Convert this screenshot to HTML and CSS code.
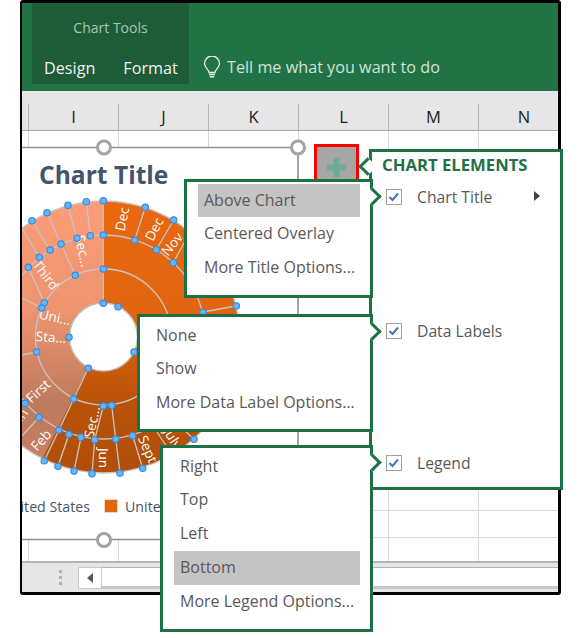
FILE: index.html
```html
<!DOCTYPE html>
<html lang="en">
<head>
<meta charset="utf-8">
<title>Chart Elements</title>
<link rel="stylesheet" href="styles.css">
</head>
<body>
<div class="frame">
  <header class="ribbon">
    <div class="tools">
      <div class="tools-title">Chart Tools</div>
      <div class="tabs"><span>Design</span><span>Format</span></div>
    </div>
    <div class="tell">
      <svg class="bulb" width="18" height="23" viewBox="0 0 18 23"><path d="M6 16.5c0-3-4.5-4.600-4.500-9A7.500 7.500 0 0 1 16.500 7.500c0 4.400-4.500 6-4.500 9z" fill="none" stroke="#e4efe8" stroke-width="1.300"/><path d="M6 18.500h6M6.800 20.800h4.400" stroke="#e4efe8" stroke-width="1.500" fill="none"/></svg>
      <span>Tell me what you want to do</span>
    </div>
  </header>
  <div class="cols">
    <div class="col stub"></div>
    <div class="col">I</div><div class="col">J</div><div class="col">K</div>
    <div class="col">L</div><div class="col">M</div><div class="col last">N</div>
  </div>
  <main class="sheet">
    <div class="chart">
      <svg class="pie" viewBox="22 147 276 392" width="276" height="392">
        <defs>
          <linearGradient id="orange" gradientUnits="userSpaceOnUse" x1="0" y1="201" x2="0" y2="473">
            <stop offset="0" stop-color="#e9680f"/><stop offset=".45" stop-color="#e06410"/><stop offset=".75" stop-color="#b85208"/><stop offset="1" stop-color="#b14e08"/>
          </linearGradient>
          <linearGradient id="salmon" gradientUnits="userSpaceOnUse" x1="0" y1="201" x2="0" y2="473">
            <stop offset="0" stop-color="#fb9d78"/><stop offset=".4" stop-color="#ee9470"/><stop offset=".75" stop-color="#bd7a5d"/><stop offset="1" stop-color="#cb8064"/>
          </linearGradient>
        </defs>
        <path class="edge" d="M22 147.500H298V539.500H22"/>
        <circle cx="103.500" cy="337" r="136" fill="url(#orange)"/>
        <path d="M103.500 337L42.600 458.600A136 136 0 0 1 103.500 201Z" fill="url(#salmon)"/>
        <g class="ring">
          <circle cx="103.500" cy="337" r="136"/>
          <circle cx="103.500" cy="337" r="102"/>
          <circle cx="103.500" cy="337" r="68"/>
          <path d="M103.300 201V303M86.300 201.700L90.300 235.700M68 205.300L77 238.300M47 212.700L61 244M32 220.700L50 250M22 228L39.300 257.300M145.300 207.300L134.700 240M173.700 220L156.300 249.700M190 232L173.300 262.700M44.300 460.700L88.300 368.300M58 466.300L69 434.300M74 471L81 437.300M92 473.700L94.700 439.700M120 473L115.700 439M142.700 468.300L132.700 435.700M236 306L203 312M61 244L75.300 275.300M28.300 267.300L44.300 302.700M22 298L41.700 308M36.700 352L22 355M103.300 406L94.700 439.700M111.700 405.300L115.700 439M39 417.300L22 436M25 403.300L22 403M157 432L167 447M194 439.300L182 428"/>
        </g>
        <circle class="hole" cx="103.500" cy="337" r="34"/>
        <g class="lbl">
          <text transform="translate(122 219) rotate(-78)">Dec</text>
          <text transform="translate(154 229) rotate(-63)">Dec</text>
          <text transform="translate(172 244) rotate(-50)">Nov</text>
          <text transform="translate(83 251) rotate(78)">Sec...</text>
          <text transform="translate(46 275) rotate(52)">Third</text>
          <text transform="translate(55 317) rotate(12)">Uni...</text>
          <text transform="translate(51 337) rotate(4)">Sta...</text>
          <text transform="translate(38 391) rotate(-42)">First</text>
          <text transform="translate(19 418) rotate(-55)">Jan</text>
          <text transform="translate(41 440) rotate(-48)">Feb</text>
          <text transform="translate(92 422) rotate(-78)">Sec...</text>
          <text transform="translate(104 458) rotate(90)">Jun</text>
          <text transform="translate(148 449) rotate(66)">Sept</text>
          <text transform="translate(173 438) rotate(58)">July</text>
        </g>
        <g class="dot">
          <circle cx="103.300" cy="200.700" r="3.200"/><circle cx="86.300" cy="201.700" r="3.200"/><circle cx="68" cy="205.300" r="3.200"/><circle cx="47" cy="212.700" r="3.200"/><circle cx="32" cy="220.700" r="3.200"/><circle cx="145.300" cy="207.300" r="3.200"/><circle cx="173.700" cy="220" r="3.200"/>
          <circle cx="103.300" cy="235" r="3.200"/><circle cx="90.300" cy="235.700" r="3.200"/><circle cx="77" cy="238.300" r="3.200"/><circle cx="61" cy="244" r="3.200"/><circle cx="50" cy="250" r="3.200"/><circle cx="39.300" cy="257.300" r="3.200"/><circle cx="28.300" cy="267.300" r="3.200"/><circle cx="134.700" cy="240" r="3.200"/><circle cx="156.300" cy="249.700" r="3.200"/><circle cx="173.300" cy="262.700" r="3.200"/>
          <circle cx="103.300" cy="269" r="3.200"/><circle cx="75.300" cy="275.300" r="3.200"/><circle cx="44.300" cy="302.700" r="3.200"/><circle cx="41.700" cy="308" r="3.200"/><circle cx="36.700" cy="352" r="3.200"/><circle cx="25" cy="403.300" r="3.200"/><circle cx="39" cy="417.300" r="3.200"/>
          <circle cx="103.300" cy="303.300" r="3.200"/><circle cx="118" cy="306.700" r="3.200"/><circle cx="69" cy="337.300" r="3.200"/><circle cx="88.300" cy="368.300" r="3.200"/><circle cx="134" cy="352" r="3.200"/>
          <circle cx="73.700" cy="399" r="3.200"/><circle cx="59" cy="430" r="3.200"/><circle cx="44.300" cy="460.700" r="3.200"/><circle cx="58" cy="466.300" r="3.200"/><circle cx="74" cy="471" r="3.200"/><circle cx="92" cy="473.700" r="3.200"/><circle cx="120" cy="473" r="3.200"/><circle cx="142.700" cy="468.300" r="3.200"/>
          <circle cx="69" cy="434.300" r="3.200"/><circle cx="81" cy="437.300" r="3.200"/><circle cx="94.700" cy="439.700" r="3.200"/><circle cx="115.700" cy="439" r="3.200"/><circle cx="132.700" cy="435.700" r="3.200"/><circle cx="103.300" cy="406" r="3.200"/><circle cx="111.700" cy="405.300" r="3.200"/><circle cx="194" cy="439.300" r="3.200"/><circle cx="203" cy="312.300" r="3.200"/><circle cx="236.300" cy="306" r="3.200"/>
        </g>
        <text class="legend-text" x="90" y="512" text-anchor="end">United States</text>
        <rect x="105" y="500" width="12" height="12" fill="#e2660f" stroke="#c9721f" stroke-width=".6"/>
        <text class="legend-text" x="125" y="512">United States</text>
        <g class="handle">
          <circle cx="104" cy="147.500" r="6.500"/><circle cx="298" cy="147.500" r="6.500"/><circle cx="104" cy="540" r="6.500"/>
        </g>
      </svg>
      <h1 class="chart-title">Chart Title</h1>
    </div>
  </main>
  <footer class="bar">
    <div class="grip"><i></i><i></i><i></i></div>
    <div class="scroll-btn"><b></b></div>
    <div class="track"></div>
  </footer>
</div>

<div class="plus-btn"><svg width="19" height="19" viewBox="0 0 19 19"><path d="M6.500 0h6v6.500H19v6h-6.500V19h-6v-6.500H0v-6h6.500z" fill="#6fac97"/></svg></div>

<aside class="panel">
  <i class="notch"></i>
  <h2>CHART ELEMENTS</h2>
  <div class="elem tall">
    <svg class="check" width="16" height="16" viewBox="0 0 16 16"><rect x=".5" y=".5" width="15" height="15" fill="#fff" stroke="#a0a0a0"/><path d="M3.500 8l3 3 5.500-6.500" fill="none" stroke="#3f78b8" stroke-width="2"/></svg>
    <span>Chart Title</span><b class="more"></b>
  </div>
  <div class="elem mid">
    <svg class="check" width="16" height="16" viewBox="0 0 16 16"><rect x=".5" y=".5" width="15" height="15" fill="#fff" stroke="#a0a0a0"/><path d="M3.500 8l3 3 5.500-6.500" fill="none" stroke="#3f78b8" stroke-width="2"/></svg>
    <span>Data Labels</span>
  </div>
  <div class="elem">
    <svg class="check" width="16" height="16" viewBox="0 0 16 16"><rect x=".5" y=".5" width="15" height="15" fill="#fff" stroke="#a0a0a0"/><path d="M3.500 8l3 3 5.500-6.500" fill="none" stroke="#3f78b8" stroke-width="2"/></svg>
    <span>Legend</span>
  </div>
</aside>

<nav class="menu menu-title">
  <i class="tip"></i>
  <div class="item on">Above Chart</div>
  <div class="item">Centered Overlay</div>
  <div class="item">More Title Options...</div>
</nav>
<nav class="menu menu-data">
  <i class="tip"></i>
  <div class="item">None</div>
  <div class="item">Show</div>
  <div class="item">More Data Label Options...</div>
</nav>
<nav class="menu menu-legend">
  <i class="tip"></i>
  <div class="item">Right</div>
  <div class="item">Top</div>
  <div class="item">Left</div>
  <div class="item on">Bottom</div>
  <div class="item">More Legend Options...</div>
</nav>
</body>
</html>
```
FILE: styles.css
```css
* { box-sizing: border-box; }
html, body { margin: 0; padding: 0; }
body {
  position: relative;
  width: 580px;
  height: 638px;
  overflow: hidden;
  background: #fff;
  font-family: "Open Sans", "Noto Sans", sans-serif;
}
.frame {
  margin-left: 20px;
  width: 541px;
  height: 595px;
  border: 3px solid #000;
  border-left-width: 2px;
  border-radius: 3px;
  display: flex;
  flex-direction: column;
  overflow: hidden;
  background: #fff;
}
.ribbon {
  height: 88px;
  flex: none;
  background: #217346;
  display: flex;
  align-items: flex-start;
  padding-left: 10px;
}
.tools {
  width: 157px;
  height: 81px;
  background: #1e5c38;
  padding-top: 15px;
}
.tools-title {
  text-align: center;
  font-size: 14px;
  line-height: 20px;
  color: #a5c8b3;
}
.tabs {
  display: flex;
  gap: 28px;
  padding: 19px 0 0 12px;
  font-size: 16.200px;
  line-height: 22px;
  color: #f2f2f2;
}
.tell {
  display: flex;
  align-items: center;
  gap: 6px;
  margin: 52px 0 0 14px;
  font-size: 16.200px;
  line-height: 24px;
  color: #cfe3d6;
}
.cols {
  height: 40px;
  flex: none;
  background: #e6e6e6;
  border-bottom: 1px solid #a6a6a6;
  display: flex;
  align-items: flex-end;
  font-size: 16.500px;
  color: #222;
}
.col {
  flex: none;
  width: 90px;
  height: 26px;
  line-height: 26px;
  text-align: center;
  border-right: 1px solid #b4b4b4;
}
.col.stub { width: 7px; }
.col.last { border-right: 0; }
.sheet {
  position: relative;
  flex: 1;
  background-color: #fff;
  background-image:
    linear-gradient(#d9d9d9, #d9d9d9),
    linear-gradient(#d9d9d9, #d9d9d9),
    linear-gradient(to left, #d9d9d9 1px, transparent 1px);
  background-size: 100% 1px, 100% 1px, 90px 100%;
  background-position: 0 379px, 0 406px, 7px 0;
  background-repeat: no-repeat, no-repeat, repeat-x;
}
.chart {
  position: absolute;
  left: 0;
  top: 16px;
  width: 276px;
  height: 392px;
  background: #fff;
}
.pie {
  position: absolute;
  left: 0;
  top: 0;
  overflow: visible;
}
.edge { fill: none; stroke: #8f8f8f; stroke-width: 1.5; }
.ring circle, .ring path { fill: none; stroke: #c9c5c1; stroke-width: 1.3; }
.hole { fill: #fff; stroke: #c4c0bc; stroke-width: 1.5; }
.lbl text {
  fill: #fff;
  font-size: 13.500px;
  text-anchor: middle;
  dominant-baseline: central;
}
.dot circle { fill: #6db2ee; stroke: #2f8ee6; stroke-width: 1.2; }
.handle circle { fill: #fff; stroke: #a3a3a3; stroke-width: 3; }
.legend-text { fill: #44546a; font-size: 14.200px; }
.chart-title {
  position: relative;
  margin: 0;
  padding: 11px 0 0 17px;
  font-size: 24.600px;
  line-height: 34px;
  font-weight: 700;
  color: #44546a;
}
.bar {
  height: 31px;
  flex: none;
  background: #e6e6e6;
  border-top: 2px solid #b4b4b4;
  display: flex;
  align-items: center;
  padding: 2px 0 2px 37px;
}
.grip { display: flex; flex-direction: column; gap: 3px; width: 19px; }
.grip i { width: 3px; height: 3px; background: #b0b0b0; }
.scroll-btn {
  width: 24px;
  height: 22px;
  background: #fff;
  border: 1px solid #c8c8c8;
  display: flex;
  align-items: center;
  justify-content: center;
}
.scroll-btn b {
  border-style: solid;
  border-width: 5.500px 6px 5.500px 0;
  border-color: transparent #595959 transparent transparent;
}
.track {
  flex: 1;
  height: 22px;
  background: #fff;
  border-top: 1px solid #b4b4b4;
  border-bottom: 3px solid #c8c8c8;
}
.plus-btn {
  position: absolute;
  left: 314px;
  top: 144px;
  width: 45px;
  height: 42px;
  background: #a6a6a6;
  border: 3px solid #fe0000;
  display: flex;
  justify-content: center;
  padding-top: 11px;
}
.panel {
  position: absolute;
  left: 369px;
  top: 149px;
  width: 194px;
  height: 341px;
  background: #fff;
  border: 3px solid #1e7145;
  padding-left: 10px;
}
.notch {
  position: absolute;
  left: -11px;
  top: 8px;
  width: 13px;
  height: 13px;
  background: #fff;
  border-left: 3px solid #1e7145;
  border-bottom: 3px solid #1e7145;
  transform: rotate(45deg);
}
.panel h2 {
  position: relative;
  margin: 0 0 5px;
  font-size: 16.700px;
  line-height: 26px;
  font-weight: 700;
  color: #1e7145;
  white-space: nowrap;
}
.elem {
  display: flex;
  align-items: flex-start;
  height: 28px;
  padding-left: 4px;
  font-size: 15.700px;
  line-height: 28px;
  color: #595959;
}
.elem.tall { height: 134px; }
.elem.mid { height: 132px; }
.check { flex: none; margin: 6px 15px 0 0; }
.more {
  margin: 8px 20px 0 auto;
  border-style: solid;
  border-width: 5px 0 5px 6px;
  border-color: transparent transparent transparent #404040;
}
.menu {
  position: absolute;
  background: #fff;
  border: 3px solid #1e7145;
  padding: 1.500px 10px 0 11px;
  font-size: 16px;
  color: #595959;
}
.menu-title { left: 184px; top: 179px; width: 189px; height: 119px; }
.menu-data { left: 137px; top: 314px; width: 236px; height: 118px; padding-left: 10px; }
.menu-legend { left: 160px; top: 445px; width: 213px; height: 187px; }
.item { height: 33.750px; line-height: 33.750px; padding-left: 6px; white-space: nowrap; }
.item.on { background: #c4c4c4; }
.tip {
  position: absolute;
  right: -9px;
  top: 8px;
  width: 13px;
  height: 13px;
  background: #fff;
  border-top: 3px solid #1e7145;
  border-right: 3px solid #1e7145;
  transform: rotate(45deg);
}
```
